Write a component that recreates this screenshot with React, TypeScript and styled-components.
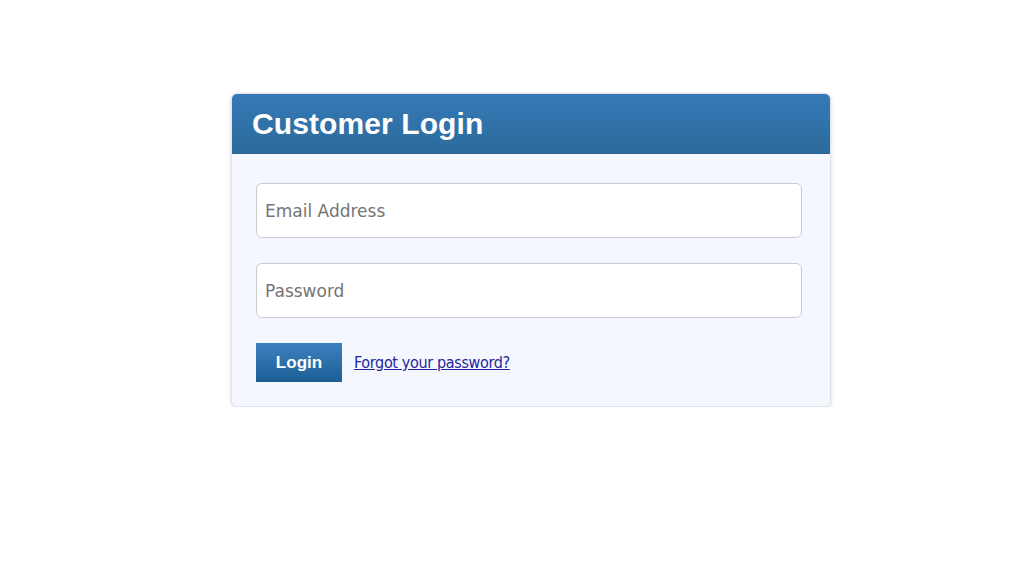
import React from "react";
import styled, { createGlobalStyle } from "styled-components";

const Global = createGlobalStyle`
  html, body { margin: 0; padding: 0; background: #ffffff; }
  body { font-family: "DejaVu Sans", Verdana, sans-serif; }
`;

const Page = styled.div`
  display: flex;
  justify-content: center;
  padding-top: 93px;
  padding-left: 38px;
`;

const Card = styled.div`
  width: 600px;
  box-sizing: border-box;
  border-radius: 6px;
  background: #f4f7fd;
  border: 1px solid #dfe3ea;
  box-shadow: 0 1px 4px rgba(0, 0, 0, 0.15);
  overflow: hidden;
`;

const Header = styled.div`
  height: 60px;
  box-sizing: border-box;
  background: linear-gradient(to bottom, #3679b6, #2b6b9c);
  border-bottom: 1px solid #2a6390;
  display: flex;
  align-items: center;
  padding-left: 20px;
`;

const Title = styled.h1`
  margin: 0;
  font-family: "Liberation Sans", Arial, sans-serif;
  font-weight: bold;
  font-size: 30px;
  color: #ffffff;
  letter-spacing: 0.1px;
`;

const Body = styled.form`
  display: flex;
  flex-direction: column;
  gap: 25px;
  padding: 29px 28px 24px 24px;
`;

const Input = styled.input`
  height: 55px;
  box-sizing: border-box;
  width: 100%;
  border: 1px solid #c9ccd2;
  border-radius: 6px;
  background: #ffffff;
  padding: 0 8px;
  font-family: "DejaVu Sans", Verdana, sans-serif;
  font-size: 17px;
  color: #333;
  outline: none;
  &::placeholder { color: #757575; }
`;

const Row = styled.div`
  display: flex;
  align-items: center;
  gap: 12px;
`;

const Button = styled.button`
  width: 86px;
  height: 39px;
  border: none;
  border-radius: 0;
  background: linear-gradient(to bottom, #3c80bf, #1d5e94);
  color: #ffffff;
  font-family: "Liberation Sans", Arial, sans-serif;
  font-weight: bold;
  font-size: 17px;
  cursor: pointer;
`;

const Link = styled.a`
  font-family: "DejaVu Sans Condensed", "DejaVu Sans", Verdana, sans-serif;
  font-size: 16px;
  color: #24249e;
  text-decoration: underline;
  letter-spacing: -0.35px;
`;

export default function App() {
  return (
    <>
      <Global />
      <Page>
        <Card>
          <Header>
            <Title>Customer Login</Title>
          </Header>
          <Body onSubmit={(e) => e.preventDefault()}>
            <Input type="email" placeholder="Email Address" />
            <Input type="password" placeholder="Password" />
            <Row>
              <Button type="submit">Login</Button>
              <Link href="#">Forgot your password?</Link>
            </Row>
          </Body>
        </Card>
      </Page>
    </>
  );
}
